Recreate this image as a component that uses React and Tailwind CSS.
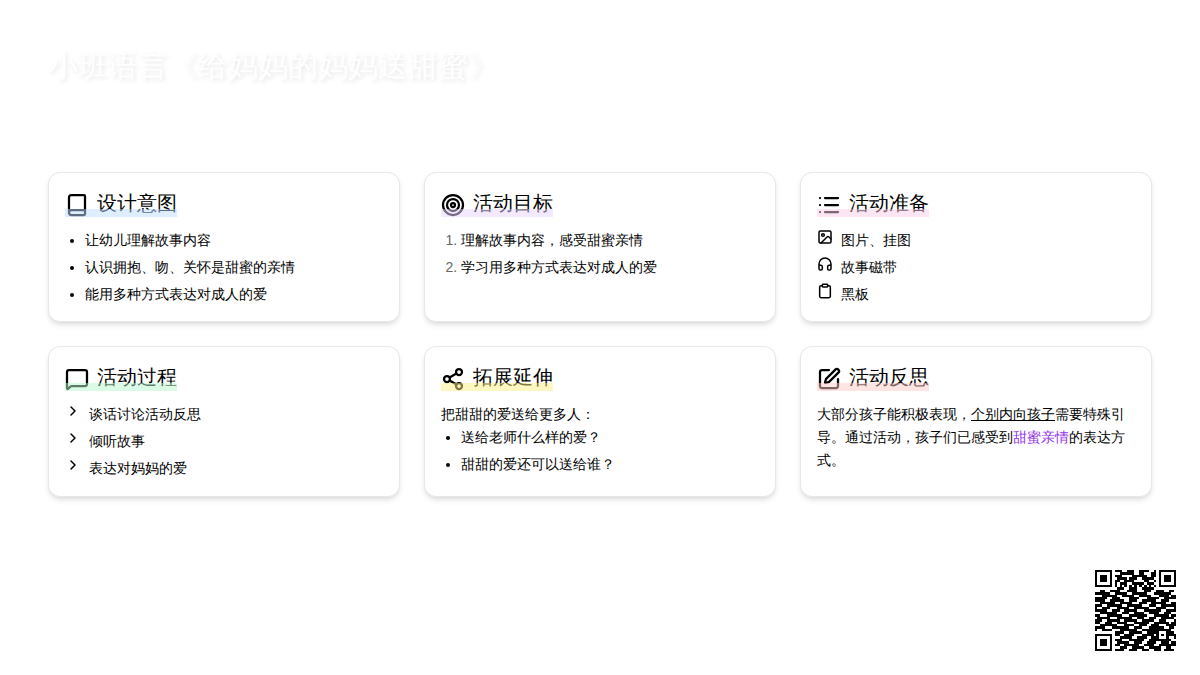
import React from "react";
import {
  Book,
  Target,
  List,
  MessageSquare,
  Share2,
  SquarePen,
  Image,
  Headphones,
  Clipboard,
  ChevronRight,
} from "lucide-react";

// QR modules, finder corners are drawn on top
const qrRows = [
  "000000001110011100111100100000000",
  "000000000011111100110001100000000",
  "000000001110000111111001100000000",
  "000000000111101110011111000000000",
  "000000001100111100001100100000000",
  "000000001011100111110111000000000",
  "000000001010101010101010100000000",
  "000000000111001110011111000000000",
  "001100111100011110001110011100110",
  "111111001111100111111000111111100",
  "000111111001111100111110001111011",
  "111110011100001111000111110011111",
  "111100111111001110011111100111000",
  "001111110011111000111001111110011",
  "111001111110011111100011100111111",
  "100111000111110011111100011110001",
  "111110011100111110001111111001111",
  "001111111001110011110011110011100",
  "110001111110001111111000111111011",
  "011111000111111001110011100111110",
  "111001111100111110011111001110001",
  "110011100111100011111100111111011",
  "001111111000111100111001110001111",
  "111100011111110011100011111100110",
  "100111100011111110011111111111100",
  "000000001111001111100111110001110",
  "000000001100111100011111010101111",
  "000000000011111001111001110001001",
  "000000001110001111110011111111100",
  "000000000111110011100111100111011",
  "000000001100111111001111001111111",
  "000000000011100111110011111001100",
  "000000001111001110011100111011110",
];

function Finder({ x, y }) {
  return (
    <g>
      <rect x={x} y={y} width="7" height="7" fill="#000" />
      <rect x={x + 1} y={y + 1} width="5" height="5" fill="#fff" />
      <rect x={x + 2} y={y + 2} width="3" height="3" fill="#000" />
    </g>
  );
}

function QrCode() {
  return (
    <svg viewBox="0 0 33 33" shapeRendering="crispEdges" className="absolute right-6 bottom-6 w-[81px] h-[81px]">
      {qrRows.map((row, y) =>
        row.split("").map((cell, x) =>
          cell === "1" ? <rect key={`${x}-${y}`} x={x} y={y} width="1" height="1" fill="#000" /> : null
        )
      )}
      <Finder x={0} y={0} />
      <Finder x={26} y={0} />
      <Finder x={0} y={26} />
    </svg>
  );
}

function Card({ icon: Icon, title, mark, children }) {
  return (
    <div className="bg-white border border-gray-200 rounded-xl shadow-md p-4">
      <h2 className="relative inline-flex items-end gap-2 text-xl font-normal text-black mb-3 align-top">
        <Icon className="w-6 h-6" strokeWidth={2.25} />
        <span>{title}</span>
        <span className={`absolute left-0 right-0 bottom-0 h-2 opacity-50 ${mark}`} />
      </h2>
      <div className="text-sm leading-relaxed text-black">{children}</div>
    </div>
  );
}

function IconRow({ icon: Icon, children }) {
  return (
    <li className="flex items-start gap-2">
      <Icon className="w-4 h-4 shrink-0" strokeWidth={2.25} />
      <span>{children}</span>
    </li>
  );
}

export default function App() {
  return (
    <div className="relative w-full h-[675px] bg-white p-12 overflow-hidden font-['Liberation_Sans',sans-serif]">
      <h1 className="text-3xl font-normal text-white [text-shadow:2px_2px_4px_rgba(0,0,0,0.1)]">
        小班语言《给妈妈的妈妈送甜蜜》
      </h1>

      <div className="grid grid-cols-3 gap-6 mt-[88px]">
        <Card icon={Book} title="设计意图" mark="bg-blue-200">
          <ul className="list-disc pl-5 space-y-1">
            <li>让幼儿理解故事内容</li>
            <li>认识拥抱、吻、关怀是甜蜜的亲情</li>
            <li>能用多种方式表达对成人的爱</li>
          </ul>
        </Card>

        <Card icon={Target} title="活动目标" mark="bg-purple-200">
          <ol className="list-decimal pl-5 space-y-1 marker:text-[#666]">
            <li>理解故事内容，感受甜蜜亲情</li>
            <li>学习用多种方式表达对成人的爱</li>
          </ol>
        </Card>

        <Card icon={List} title="活动准备" mark="bg-pink-200">
          <ul className="space-y-1">
            <IconRow icon={Image}>图片、挂图</IconRow>
            <IconRow icon={Headphones}>故事磁带</IconRow>
            <IconRow icon={Clipboard}>黑板</IconRow>
          </ul>
        </Card>

        <Card icon={MessageSquare} title="活动过程" mark="bg-green-200">
          <ul className="space-y-1">
            <IconRow icon={ChevronRight}>谈话讨论活动反思</IconRow>
            <IconRow icon={ChevronRight}>倾听故事</IconRow>
            <IconRow icon={ChevronRight}>表达对妈妈的爱</IconRow>
          </ul>
        </Card>

        <Card icon={Share2} title="拓展延伸" mark="bg-yellow-200">
          <p>把甜甜的爱送给更多人：</p>
          <ul className="list-disc pl-5 space-y-1">
            <li>送给老师什么样的爱？</li>
            <li>甜甜的爱还可以送给谁？</li>
          </ul>
        </Card>

        <Card icon={SquarePen} title="活动反思" mark="bg-red-200">
          <p>
            大部分孩子能积极表现，<span className="underline">个别内向孩子</span>需要特殊引导。通过活动，孩子们已感受到
            <span className="text-[#9333ea]">甜蜜亲情</span>的表达方式。
          </p>
        </Card>
      </div>

      <QrCode />
    </div>
  );
}
